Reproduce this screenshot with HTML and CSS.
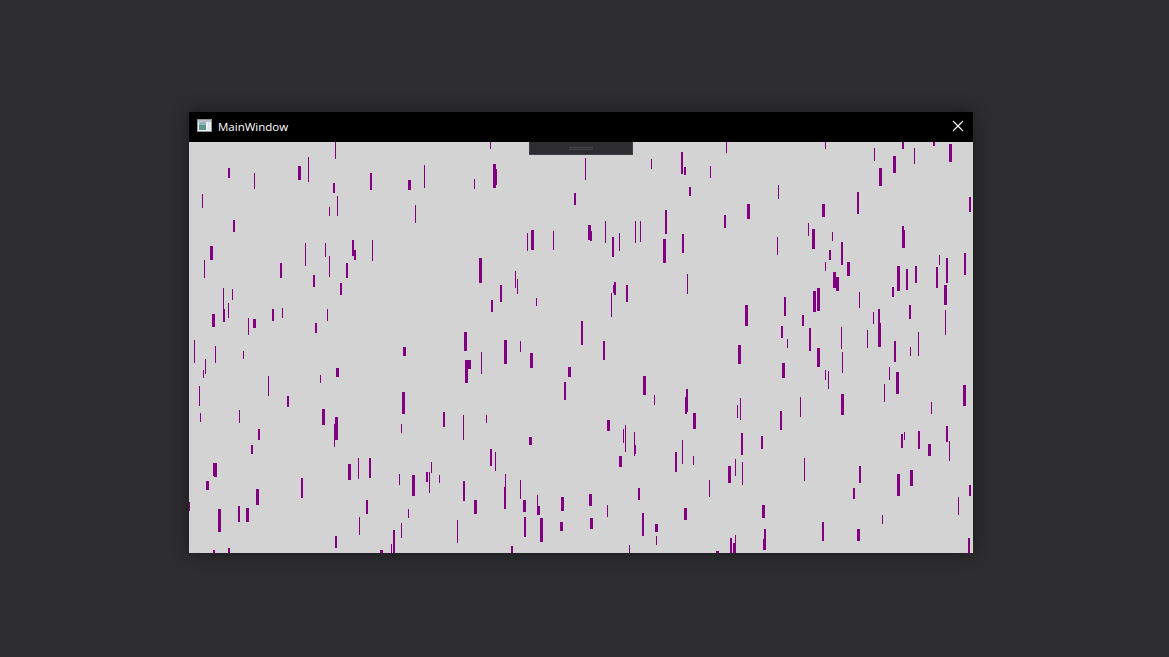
FILE: index.html
```html
<!DOCTYPE html>
<html lang="en">
<head>
    <meta charset="UTF-8">
    <title>MainWindow</title>
    <link rel="stylesheet" href="styles.css">
</head>
<body>
    <div class="window">
        <div class="titlebar">
            <svg class="app-icon" width="15" height="13" viewBox="0 0 15 13">
                <rect x="0.5" y="0.5" width="14" height="12" fill="#eef1f3" stroke="#8e9499"/>
                <rect x="1" y="1" width="13" height="2" fill="#b9c0c6"/>
                <rect x="2" y="3" width="7" height="8" fill="#5f9488"/>
                <rect x="2" y="3" width="7" height="3" fill="#8fb4c4"/>
                <rect x="11" y="3" width="2" height="8" fill="#dfe8ec"/>
            </svg>
            <span class="title">MainWindow</span>
            <svg class="close" width="12" height="12" viewBox="0 0 12 12">
                <path d="M1 1L11 11M11 1L1 11" stroke="#fff" stroke-width="1.2" fill="none"/>
            </svg>
        </div>
        <div class="surface">
            <svg class="bars" width="784" height="411" viewBox="189 142 784 411">
                <rect x="335" y="142" width="1" height="17"/>
                <rect x="228" y="168" width="2" height="10"/>
                <rect x="254" y="173" width="1" height="16"/>
                <rect x="298" y="166" width="3" height="14"/>
                <rect x="308" y="157" width="1" height="25"/>
                <rect x="333" y="183" width="2" height="10"/>
                <rect x="370" y="173" width="2" height="17"/>
                <rect x="202" y="194" width="1" height="14"/>
                <rect x="329" y="207" width="1" height="9"/>
                <rect x="337" y="196" width="1" height="20"/>
                <rect x="233" y="220" width="2" height="12"/>
                <rect x="210" y="246" width="3" height="14"/>
                <rect x="204" y="260" width="1" height="18"/>
                <rect x="305" y="243" width="1" height="23"/>
                <rect x="325" y="243" width="1" height="14"/>
                <rect x="329" y="256" width="1" height="21"/>
                <rect x="352" y="240" width="2" height="16"/>
                <rect x="354" y="250" width="2" height="10"/>
                <rect x="372" y="240" width="1" height="21"/>
                <rect x="280" y="263" width="2" height="15"/>
                <rect x="346" y="263" width="2" height="15"/>
                <rect x="313" y="275" width="2" height="12"/>
                <rect x="340" y="283" width="2" height="12"/>
                <rect x="223" y="288" width="1" height="23"/>
                <rect x="232" y="289" width="1" height="11"/>
                <rect x="228" y="303" width="1" height="15"/>
                <rect x="223" y="309" width="2" height="13"/>
                <rect x="212" y="314" width="3" height="13"/>
                <rect x="248" y="318" width="1" height="17"/>
                <rect x="253" y="319" width="3" height="9"/>
                <rect x="272" y="309" width="2" height="12"/>
                <rect x="282" y="308" width="1" height="10"/>
                <rect x="327" y="309" width="1" height="12"/>
                <rect x="315" y="323" width="2" height="10"/>
                <rect x="194" y="340" width="1" height="23"/>
                <rect x="215" y="346" width="1" height="17"/>
                <rect x="490" y="142" width="1" height="7"/>
                <rect x="424" y="165" width="1" height="23"/>
                <rect x="408" y="180" width="3" height="10"/>
                <rect x="474" y="179" width="1" height="10"/>
                <rect x="493" y="164" width="3" height="24"/>
                <rect x="496" y="169" width="1" height="16"/>
                <rect x="574" y="193" width="2" height="12"/>
                <rect x="415" y="205" width="1" height="18"/>
                <rect x="527" y="233" width="1" height="18"/>
                <rect x="531" y="230" width="3" height="20"/>
                <rect x="553" y="231" width="1" height="19"/>
                <rect x="479" y="258" width="3" height="25"/>
                <rect x="515" y="271" width="1" height="17"/>
                <rect x="517" y="279" width="1" height="15"/>
                <rect x="500" y="285" width="2" height="17"/>
                <rect x="491" y="300" width="2" height="12"/>
                <rect x="536" y="298" width="1" height="8"/>
                <rect x="464" y="332" width="3" height="19"/>
                <rect x="403" y="347" width="3" height="9"/>
                <rect x="504" y="340" width="3" height="24"/>
                <rect x="520" y="341" width="1" height="11"/>
                <rect x="585" y="158" width="1" height="22"/>
                <rect x="651" y="159" width="1" height="10"/>
                <rect x="681" y="152" width="2" height="22"/>
                <rect x="684" y="167" width="2" height="8"/>
                <rect x="710" y="166" width="1" height="12"/>
                <rect x="726" y="142" width="1" height="11"/>
                <rect x="689" y="187" width="2" height="9"/>
                <rect x="747" y="204" width="3" height="15"/>
                <rect x="724" y="215" width="2" height="13"/>
                <rect x="665" y="210" width="2" height="24"/>
                <rect x="588" y="225" width="3" height="15"/>
                <rect x="590" y="231" width="2" height="10"/>
                <rect x="605" y="221" width="1" height="22"/>
                <rect x="612" y="237" width="2" height="20"/>
                <rect x="619" y="233" width="1" height="18"/>
                <rect x="635" y="221" width="1" height="22"/>
                <rect x="640" y="221" width="1" height="21"/>
                <rect x="663" y="239" width="3" height="24"/>
                <rect x="682" y="234" width="2" height="19"/>
                <rect x="687" y="274" width="1" height="20"/>
                <rect x="614" y="282" width="2" height="13"/>
                <rect x="613" y="285" width="1" height="8"/>
                <rect x="626" y="285" width="2" height="17"/>
                <rect x="611" y="293" width="1" height="24"/>
                <rect x="581" y="321" width="2" height="24"/>
                <rect x="603" y="341" width="2" height="19"/>
                <rect x="745" y="305" width="3" height="21"/>
                <rect x="738" y="345" width="3" height="19"/>
                <rect x="825" y="142" width="1" height="7"/>
                <rect x="874" y="148" width="1" height="13"/>
                <rect x="902" y="142" width="2" height="7"/>
                <rect x="914" y="148" width="1" height="16"/>
                <rect x="933" y="142" width="2" height="4"/>
                <rect x="949" y="144" width="3" height="18"/>
                <rect x="893" y="156" width="3" height="17"/>
                <rect x="879" y="168" width="3" height="18"/>
                <rect x="778" y="185" width="1" height="14"/>
                <rect x="822" y="204" width="3" height="13"/>
                <rect x="857" y="192" width="2" height="22"/>
                <rect x="969" y="197" width="2" height="15"/>
                <rect x="808" y="223" width="1" height="13"/>
                <rect x="812" y="229" width="3" height="20"/>
                <rect x="832" y="232" width="1" height="9"/>
                <rect x="777" y="237" width="1" height="18"/>
                <rect x="902" y="226" width="2" height="22"/>
                <rect x="903" y="230" width="2" height="18"/>
                <rect x="841" y="242" width="2" height="23"/>
                <rect x="829" y="250" width="2" height="10"/>
                <rect x="825" y="262" width="1" height="9"/>
                <rect x="847" y="262" width="3" height="14"/>
                <rect x="833" y="272" width="3" height="16"/>
                <rect x="836" y="277" width="3" height="14"/>
                <rect x="897" y="266" width="3" height="25"/>
                <rect x="906" y="269" width="2" height="21"/>
                <rect x="915" y="266" width="2" height="17"/>
                <rect x="939" y="255" width="1" height="10"/>
                <rect x="936" y="267" width="2" height="21"/>
                <rect x="946" y="258" width="2" height="25"/>
                <rect x="964" y="253" width="2" height="22"/>
                <rect x="944" y="285" width="3" height="20"/>
                <rect x="892" y="287" width="2" height="10"/>
                <rect x="813" y="291" width="3" height="21"/>
                <rect x="817" y="288" width="3" height="23"/>
                <rect x="784" y="297" width="2" height="19"/>
                <rect x="859" y="292" width="1" height="16"/>
                <rect x="802" y="315" width="2" height="11"/>
                <rect x="909" y="305" width="2" height="14"/>
                <rect x="873" y="312" width="1" height="12"/>
                <rect x="878" y="309" width="2" height="23"/>
                <rect x="878" y="323" width="3" height="24"/>
                <rect x="945" y="310" width="1" height="25"/>
                <rect x="781" y="326" width="2" height="12"/>
                <rect x="787" y="339" width="1" height="9"/>
                <rect x="809" y="328" width="2" height="23"/>
                <rect x="841" y="327" width="1" height="22"/>
                <rect x="867" y="330" width="1" height="18"/>
                <rect x="894" y="341" width="2" height="21"/>
                <rect x="910" y="347" width="1" height="9"/>
                <rect x="918" y="332" width="1" height="24"/>
                <rect x="817" y="348" width="3" height="19"/>
                <rect x="243" y="351" width="1" height="8"/>
                <rect x="205" y="359" width="1" height="15"/>
                <rect x="203" y="370" width="1" height="8"/>
                <rect x="199" y="386" width="1" height="20"/>
                <rect x="268" y="376" width="1" height="20"/>
                <rect x="320" y="375" width="1" height="8"/>
                <rect x="336" y="368" width="3" height="9"/>
                <rect x="287" y="396" width="2" height="11"/>
                <rect x="322" y="409" width="3" height="16"/>
                <rect x="200" y="413" width="1" height="9"/>
                <rect x="239" y="410" width="1" height="13"/>
                <rect x="335" y="417" width="3" height="23"/>
                <rect x="334" y="424" width="1" height="23"/>
                <rect x="258" y="429" width="2" height="11"/>
                <rect x="251" y="445" width="2" height="9"/>
                <rect x="213" y="463" width="3" height="13"/>
                <rect x="214" y="463" width="3" height="14"/>
                <rect x="206" y="481" width="3" height="9"/>
                <rect x="348" y="464" width="3" height="16"/>
                <rect x="358" y="458" width="1" height="21"/>
                <rect x="369" y="458" width="2" height="20"/>
                <rect x="301" y="478" width="2" height="20"/>
                <rect x="256" y="489" width="3" height="16"/>
                <rect x="189" y="502" width="1" height="9"/>
                <rect x="218" y="509" width="3" height="23"/>
                <rect x="238" y="506" width="2" height="16"/>
                <rect x="246" y="508" width="3" height="14"/>
                <rect x="366" y="500" width="2" height="14"/>
                <rect x="359" y="517" width="1" height="18"/>
                <rect x="335" y="536" width="2" height="12"/>
                <rect x="213" y="550" width="2" height="3"/>
                <rect x="228" y="548" width="2" height="5"/>
                <rect x="380" y="550" width="3" height="3"/>
                <rect x="465" y="360" width="3" height="23"/>
                <rect x="468" y="360" width="3" height="9"/>
                <rect x="481" y="352" width="1" height="22"/>
                <rect x="530" y="353" width="3" height="15"/>
                <rect x="568" y="367" width="3" height="10"/>
                <rect x="564" y="382" width="2" height="18"/>
                <rect x="402" y="392" width="3" height="22"/>
                <rect x="443" y="412" width="2" height="15"/>
                <rect x="463" y="415" width="1" height="25"/>
                <rect x="486" y="415" width="1" height="8"/>
                <rect x="401" y="424" width="1" height="9"/>
                <rect x="529" y="437" width="3" height="8"/>
                <rect x="490" y="449" width="2" height="17"/>
                <rect x="495" y="452" width="1" height="19"/>
                <rect x="431" y="462" width="1" height="11"/>
                <rect x="399" y="474" width="1" height="11"/>
                <rect x="412" y="475" width="3" height="21"/>
                <rect x="426" y="472" width="2" height="10"/>
                <rect x="429" y="472" width="1" height="21"/>
                <rect x="439" y="475" width="1" height="8"/>
                <rect x="463" y="481" width="2" height="20"/>
                <rect x="474" y="500" width="3" height="14"/>
                <rect x="505" y="474" width="1" height="14"/>
                <rect x="504" y="487" width="2" height="22"/>
                <rect x="520" y="480" width="1" height="19"/>
                <rect x="523" y="500" width="3" height="12"/>
                <rect x="537" y="495" width="1" height="13"/>
                <rect x="537" y="506" width="3" height="9"/>
                <rect x="561" y="497" width="3" height="14"/>
                <rect x="408" y="509" width="1" height="9"/>
                <rect x="401" y="523" width="1" height="15"/>
                <rect x="393" y="530" width="2" height="23"/>
                <rect x="391" y="544" width="1" height="9"/>
                <rect x="457" y="520" width="1" height="23"/>
                <rect x="524" y="517" width="2" height="20"/>
                <rect x="540" y="518" width="3" height="24"/>
                <rect x="560" y="522" width="3" height="9"/>
                <rect x="511" y="546" width="2" height="7"/>
                <rect x="643" y="376" width="3" height="19"/>
                <rect x="654" y="395" width="1" height="10"/>
                <rect x="686" y="389" width="2" height="23"/>
                <rect x="685" y="397" width="2" height="17"/>
                <rect x="693" y="413" width="3" height="16"/>
                <rect x="737" y="405" width="1" height="13"/>
                <rect x="740" y="398" width="1" height="22"/>
                <rect x="607" y="420" width="3" height="11"/>
                <rect x="623" y="429" width="1" height="14"/>
                <rect x="625" y="425" width="1" height="27"/>
                <rect x="634" y="432" width="1" height="24"/>
                <rect x="635" y="445" width="1" height="9"/>
                <rect x="619" y="456" width="3" height="11"/>
                <rect x="675" y="452" width="2" height="20"/>
                <rect x="682" y="440" width="1" height="24"/>
                <rect x="693" y="456" width="1" height="9"/>
                <rect x="741" y="433" width="2" height="22"/>
                <rect x="761" y="436" width="2" height="13"/>
                <rect x="728" y="466" width="3" height="17"/>
                <rect x="735" y="459" width="1" height="17"/>
                <rect x="742" y="462" width="1" height="23"/>
                <rect x="709" y="480" width="1" height="17"/>
                <rect x="589" y="494" width="3" height="12"/>
                <rect x="638" y="488" width="2" height="12"/>
                <rect x="607" y="505" width="1" height="12"/>
                <rect x="590" y="518" width="3" height="11"/>
                <rect x="642" y="513" width="2" height="23"/>
                <rect x="655" y="524" width="3" height="8"/>
                <rect x="656" y="536" width="1" height="9"/>
                <rect x="684" y="508" width="3" height="12"/>
                <rect x="762" y="505" width="3" height="13"/>
                <rect x="764" y="529" width="2" height="21"/>
                <rect x="763" y="539" width="1" height="11"/>
                <rect x="629" y="545" width="1" height="8"/>
                <rect x="716" y="551" width="3" height="2"/>
                <rect x="730" y="538" width="2" height="15"/>
                <rect x="733" y="543" width="3" height="10"/>
                <rect x="735" y="535" width="1" height="9"/>
                <rect x="782" y="363" width="3" height="15"/>
                <rect x="825" y="370" width="1" height="10"/>
                <rect x="828" y="371" width="1" height="18"/>
                <rect x="842" y="352" width="1" height="21"/>
                <rect x="889" y="367" width="1" height="13"/>
                <rect x="896" y="372" width="3" height="22"/>
                <rect x="884" y="384" width="1" height="18"/>
                <rect x="963" y="385" width="3" height="21"/>
                <rect x="800" y="397" width="1" height="20"/>
                <rect x="841" y="394" width="3" height="21"/>
                <rect x="780" y="411" width="2" height="19"/>
                <rect x="931" y="402" width="1" height="12"/>
                <rect x="901" y="434" width="2" height="14"/>
                <rect x="904" y="432" width="1" height="8"/>
                <rect x="918" y="431" width="2" height="18"/>
                <rect x="928" y="444" width="3" height="12"/>
                <rect x="946" y="426" width="2" height="16"/>
                <rect x="949" y="441" width="1" height="20"/>
                <rect x="804" y="458" width="1" height="23"/>
                <rect x="859" y="466" width="2" height="17"/>
                <rect x="897" y="474" width="3" height="22"/>
                <rect x="910" y="470" width="3" height="16"/>
                <rect x="853" y="488" width="2" height="11"/>
                <rect x="969" y="485" width="2" height="11"/>
                <rect x="958" y="497" width="1" height="18"/>
                <rect x="882" y="515" width="1" height="9"/>
                <rect x="822" y="522" width="2" height="19"/>
                <rect x="857" y="529" width="3" height="12"/>
                <rect x="968" y="538" width="2" height="15"/>
            </svg>
            <!-- Asa del menu replegado, encima del dibujo -->
            <div class="grip"><span class="grip-lines"></span></div>
        </div>
    </div>
</body>
</html>
```

FILE: styles.css
```css
/* Fondo del escritorio y sitio de la ventana */
body {
    background: #2d2d30;
    font-family: "Open Sans", "Noto Sans", sans-serif;
    margin: 0;
    height: 100vh;
    padding: 112px 0 0 189px;
    box-sizing: border-box;
    overflow: hidden;
}

.window {
    width: 784px;
    box-shadow: 0 0 16px rgba(0,0,0,0.45);
}

/* Barra de titulo */
.titlebar {
    background: #000;
    height: 30px;
    box-sizing: border-box;
    display: flex;
    align-items: center;
    padding: 0 9px 2px 8px;
    color: #fff;
    font-size: 11.5px;
}

.app-icon {
    margin: 0 6px 1px 0;
}

.title {
    flex: 1;
}

/* Superficie de dibujo */
.surface {
    position: relative;
    height: 411px;
    background: #d3d3d3;
}

.bars {
    display: block;
    shape-rendering: crispEdges;
}

.bars rect {
    fill: #800080;
}

.grip {
    position: absolute;
    top: 0;
    left: 340px;
    width: 104px;
    height: 13px;
    box-sizing: border-box;
    background: #2d2d30;
    border: 1px solid #3f3f46;
    border-top: none;
    display: flex;
    justify-content: center;
}

.grip-lines {
    width: 24px;
    height: 1px;
    margin-top: 5px;
    border-top: 1px solid #46464b;
    border-bottom: 1px solid #46464b;
}
```
